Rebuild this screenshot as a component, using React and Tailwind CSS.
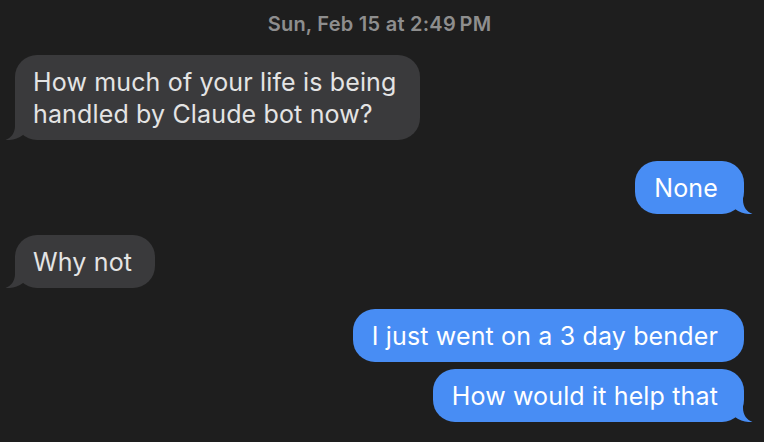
import React from 'react';

const messages = [
  { id: 1, from: 'them', lines: ['How much of your life is being', 'handled by Claude bot now?'], gap: 'mt-[21px]' },
  { id: 2, from: 'me', lines: ['None'], gap: 'mt-[21px]' },
  { id: 3, from: 'them', lines: ['Why not'], gap: 'mt-[21px]' },
  { id: 4, from: 'me', lines: ['I just went on a 3 day bender'], gap: 'mt-[21px]', noTail: true },
  { id: 5, from: 'me', lines: ['How would it help that'], gap: 'mt-[7px]' },
];

const Tail = ({ mine }) => (
  <svg
    width="20"
    height="22"
    viewBox="0 0 20 22"
    className={
      mine
        ? 'absolute bottom-0 -right-[9px] -scale-x-100 fill-[#488df4]'
        : 'absolute bottom-0 -left-[10px] fill-[#3a3a3c]'
    }
  >
    <path d="M10 0 L10 8 C10 15 6 20 0.5 22 C7 22.5 13 20.5 18 17 L18 0 Z" />
  </svg>
);

const Bubble = ({ msg }) => {
  const mine = msg.from === 'me';
  return (
    <div className={`flex ${mine ? 'justify-end' : 'justify-start'} ${msg.gap}`}>
      <div
        className={`relative rounded-[22px] py-[10.5px] text-[25px] leading-[32px] tracking-[0.15px] ${
          mine
            ? 'bg-[#488df4] text-white pl-[19px] pr-[26px]'
            : 'bg-[#3a3a3c] text-[#e4e4e4] pl-[18px] pr-[23px]'
        }`}
      >
        {!msg.noTail && <Tail mine={mine} />}
        <span className="relative">
          {msg.lines.map((line, i) => (
            <React.Fragment key={i}>
              {i > 0 && <br />}
              {line}
            </React.Fragment>
          ))}
        </span>
      </div>
    </div>
  );
};

export default function App() {
  return (
    <div
      className="w-[764px] h-[442px] overflow-hidden bg-[#1e1e1e] pt-[14px] pl-[15px] pr-[20px] flex flex-col"
      style={{ fontFamily: 'Inter, "Liberation Sans", sans-serif' }}
    >
      <div className="text-center text-[20px] leading-[20px] tracking-[0.25px] font-semibold text-[#8e8e8e]">
        Sun, Feb 15 at 2:49&#8239;PM
      </div>
      {messages.map((m) => (
        <Bubble key={m.id} msg={m} />
      ))}
    </div>
  );
}
